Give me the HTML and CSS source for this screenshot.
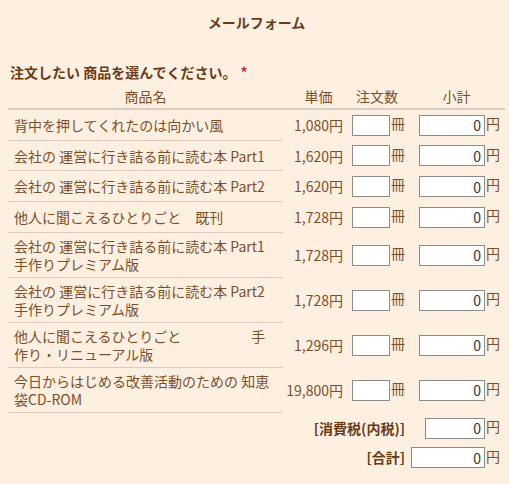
FILE: index.html
```html
<!DOCTYPE html>
<html lang="ja">
<head>
    <meta charset="UTF-8">
    <meta name="viewport" content="width=device-width, initial-scale=1.0">
    <title>メールフォーム</title>
    <link rel="stylesheet" href="styles.css">
</head>
<body>
    <div class="container">
        <h1 class="title">メールフォーム</h1>
        <p class="lead">注文したい 商品を選んでください。<span class="required">*</span></p>
        <form id="order-form">
            <table class="order">
                <colgroup>
                    <col class="col-name">
                    <col class="col-price">
                    <col class="col-qty">
                    <col class="col-sub">
                </colgroup>
                <thead>
                    <tr>
                        <th>商品名</th>
                        <th class="price-head">単価</th>
                        <th>注文数</th>
                        <th>小計</th>
                    </tr>
                </thead>
                <tbody>
                    <tr>
                        <td class="name">背中を押してくれたのは向かい風</td>
                        <td class="price">1,080円</td>
                        <td class="qty"><input type="text" class="num">冊</td>
                        <td class="sub"><input type="text" class="subtotal" value="0" readonly>円</td>
                    </tr>
                    <tr>
                        <td class="name">会社の 運営に行き詰る前に読む本 Part1</td>
                        <td class="price">1,620円</td>
                        <td class="qty"><input type="text" class="num">冊</td>
                        <td class="sub"><input type="text" class="subtotal" value="0" readonly>円</td>
                    </tr>
                    <tr>
                        <td class="name">会社の 運営に行き詰る前に読む本 Part2</td>
                        <td class="price">1,620円</td>
                        <td class="qty"><input type="text" class="num">冊</td>
                        <td class="sub"><input type="text" class="subtotal" value="0" readonly>円</td>
                    </tr>
                    <tr>
                        <td class="name">他人に聞こえるひとりごと　既刊</td>
                        <td class="price">1,728円</td>
                        <td class="qty"><input type="text" class="num">冊</td>
                        <td class="sub"><input type="text" class="subtotal" value="0" readonly>円</td>
                    </tr>
                    <tr>
                        <td class="name">会社の 運営に行き詰る前に読む本 Part1 手作りプレミアム版</td>
                        <td class="price">1,728円</td>
                        <td class="qty"><input type="text" class="num">冊</td>
                        <td class="sub"><input type="text" class="subtotal" value="0" readonly>円</td>
                    </tr>
                    <tr>
                        <td class="name">会社の 運営に行き詰る前に読む本 Part2 手作りプレミアム版</td>
                        <td class="price">1,728円</td>
                        <td class="qty"><input type="text" class="num">冊</td>
                        <td class="sub"><input type="text" class="subtotal" value="0" readonly>円</td>
                    </tr>
                    <tr>
                        <td class="name">他人に聞こえるひとりごと　　　　　手作り・リニューアル版</td>
                        <td class="price">1,296円</td>
                        <td class="qty"><input type="text" class="num">冊</td>
                        <td class="sub"><input type="text" class="subtotal" value="0" readonly>円</td>
                    </tr>
                    <tr>
                        <td class="name">今日からはじめる改善活動のための 知恵袋CD-ROM</td>
                        <td class="price">19,800円</td>
                        <td class="qty"><input type="text" class="num">冊</td>
                        <td class="sub"><input type="text" class="subtotal" value="0" readonly>円</td>
                    </tr>
                    <tr class="sum">
                        <td colspan="3" class="sum-label">[消費税(内税)]</td>
                        <td class="sub"><input type="text" class="tax" value="0" readonly>円</td>
                    </tr>
                    <tr class="sum">
                        <td colspan="3" class="sum-label">[合計]</td>
                        <td class="sub"><input type="text" class="total" value="0" readonly>円</td>
                    </tr>
                </tbody>
            </table>
        </form>
    </div>
</body>
</html>
```

FILE: styles.css
```css
body {
    font-family: "Noto Sans CJK JP", "Noto Sans", sans-serif;
    font-size: 14px;
    margin: 0;
    padding: 0;
    background-color: #fdf0e1;
    color: #7d4e2a;
}
.container {
    padding: 0 4px 0 8px;
}
.title {
    margin: 0;
    padding-top: 12px;
    font-size: 14px;
    line-height: 20px;
    font-weight: bold;
    text-align: center;
    color: #6b3d1c;
}
.lead {
    margin: 30px 0 0 2px;
    line-height: 20px;
    font-weight: bold;
    color: #6a3b17;
}
.required {
    color: #c8283c;
    margin-left: 4px;
}
.order {
    margin-top: 4px;
    width: 497px;
    table-layout: fixed;
    border-collapse: separate;
    border-spacing: 0;
}
.col-name { width: 275px; }
.col-price { width: 63px; }
.col-qty { width: 62px; }
.col-sub { width: 97px; }
.order th {
    font-weight: normal;
    line-height: 20px;
    padding: 0 0 2px;
    border-bottom: 2px solid #d8cec4;
    text-align: center;
}
.order th.price-head {
    padding-left: 8px;
}
.order td {
    padding: 4px 0;
    line-height: 18px;
    vertical-align: middle;
    border-bottom: 1px solid transparent;
}
.order td.name {
    padding: 4px 6px;
    border-bottom-color: #d9ccbe;
}
.order td.price {
    text-align: right;
    padding-right: 3px;
}
.order td.qty {
    padding-left: 6px;
}
.order td.sub {
    text-align: right;
    padding-right: 5px;
}
.order .sum td {
    border-bottom: none;
}
.order td.sum-label {
    padding-right: 3px;
    text-align: right;
    font-weight: bold;
    color: #6a3b17;
}
input[type="text"] {
    box-sizing: border-box;
    height: 21px;
    margin: 0 1px 0 0;
    padding: 0 3px;
    border: 1px solid #8c8c8c;
    background: #fff;
    font-family: "Noto Sans CJK JP", sans-serif;
    font-size: 14px;
    color: #333;
    text-align: right;
    vertical-align: middle;
}
input.num { width: 38px; }
input.subtotal { width: 66px; }
input.tax { width: 60px; }
input.total { width: 74px; }
```
